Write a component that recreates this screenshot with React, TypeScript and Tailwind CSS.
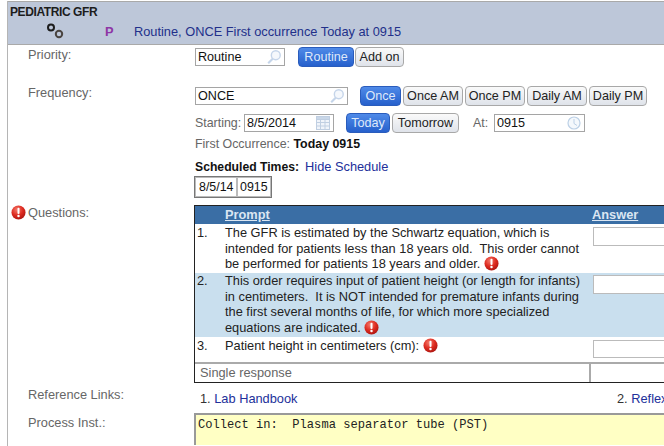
import React from "react";

function Alert({ className = "" }: { className?: string }) {
  return (
    <svg viewBox="0 0 16 16" className={`inline-block w-[15px] h-[15px] ${className}`}>
      <defs>
        <radialGradient id="alertFill" cx="40%" cy="30%" r="75%">
          <stop offset="0%" stopColor="#f47a6c" />
          <stop offset="55%" stopColor="#dd2a1f" />
          <stop offset="100%" stopColor="#a81410" />
        </radialGradient>
      </defs>
      <circle cx="8" cy="8" r="7.5" fill="url(#alertFill)" />
      <rect x="6.9" y="3" width="2.2" height="6.5" rx="1" fill="#fff" />
      <circle cx="8" cy="11.8" r="1.3" fill="#fff" />
    </svg>
  );
}

function SearchIcon() {
  return (
    <svg viewBox="0 0 18 18" className="w-[18px] h-[16px]" fill="none">
      <circle cx="11" cy="7" r="5" stroke="#c5d5ea" strokeWidth="1.6" fill="#f5f8fc" />
      <path d="M7.5 11 L2.5 16" stroke="#c5d5ea" strokeWidth="2.4" />
    </svg>
  );
}

function GearPair() {
  return (
    <svg viewBox="0 0 18 18" className="w-[18px] h-[18px]" fill="none">
      <circle cx="5" cy="4.5" r="3" stroke="#1d1d1d" strokeWidth="2" />
      <circle cx="13" cy="11" r="3.2" stroke="#4a4440" strokeWidth="2" />
    </svg>
  );
}

function CalendarIcon() {
  return (
    <svg viewBox="0 0 14 14" className="w-[14px] h-[14px]" fill="none" stroke="#c0cfe2">
      <rect x="0.5" y="0.5" width="13" height="13" fill="#f0f4fa" />
      <rect x="0.5" y="0.5" width="13" height="3" fill="#c9d7e8" />
      <path d="M0.5 6.5H13.5M0.5 10H13.5M4.5 3.5V13.5M9 3.5V13.5" />
    </svg>
  );
}

function ClockIcon() {
  return (
    <svg viewBox="0 0 14 14" className="w-[14px] h-[14px]" fill="none" stroke="#bcd0e6">
      <circle cx="7" cy="7" r="6" strokeWidth="1.2" fill="#f4f8fc" />
      <path d="M7 3V7.5L10 9.5" />
    </svg>
  );
}

function Pill({ label, active = false, width }: { label: string; active?: boolean; width: string }) {
  if (active) {
    return (
      <span
        className={`${width} h-[20px] flex items-center justify-center rounded-[4px] border border-[#2a5cbc] bg-gradient-to-b from-[#4f8ae8] to-[#2660cc] text-[#dfe9fa] text-[12.6px]`}
      >
        {label}
      </span>
    );
  }
  return (
    <span
      className={`${width} h-[20px] flex items-center justify-center rounded-[4px] border border-[#a8a8a8] bg-gradient-to-b from-[#fafafa] to-[#dfe3ea] text-[#222] text-[12.6px] whitespace-nowrap`}
    >
      {label}
    </span>
  );
}

function Field({ value, width, icon, iconGap = "pr-[1px]" }: { value: string; width: string; icon: React.ReactNode; iconGap?: string }) {
  return (
    <div
      className={`${width} ${iconGap} h-[18px] flex items-center justify-between border border-[#a5a5a5] bg-white pl-[2px] text-[12.6px] text-[#111]`}
    >
      <span>{value}</span>
      {icon}
    </div>
  );
}

const labelClass = "w-[187px] pl-[20px] text-[12.8px] leading-[15px] text-[#666] shrink-0";

function QuestionRow({
  num,
  shaded,
  height,
  textPad,
  boxClass,
  children,
}: {
  num: string;
  shaded?: boolean;
  height: string;
  textPad: string;
  boxClass: string;
  children: React.ReactNode;
}) {
  return (
    <div className={`flex ${height} ${shaded ? "bg-[#c9dfee]" : "bg-white"} text-[12.8px] leading-[15.5px] text-[#222]`}>
      <span className={`w-[30px] pl-[2px] ${textPad} shrink-0`}>{num}</span>
      <div className={`w-[368px] shrink-0 ${textPad} whitespace-nowrap`}>{children}</div>
      <div className="flex-1 overflow-hidden">
        <div className={`w-[90px] ${boxClass} bg-white border border-[#bbb]`} />
      </div>
    </div>
  );
}

export default function App() {
  return (
    <div className="w-[664px] h-[446px] overflow-hidden bg-white font-['Liberation_Sans',Arial,sans-serif] pl-[7px] pt-[1px]">
      <div className="h-[445px] border-l border-[#b5b5b5] overflow-hidden">
        {/* Order header */}
        <div className="h-[44px] bg-[#bdc7d9] border-t border-b border-[#a9a9a9] pl-[2px] pt-[2px]">
          <div className="text-[12px] leading-[16px] font-bold tracking-[-0.4px] text-[#1c1c1c]">PEDIATRIC GFR</div>
          <div className="flex items-center h-[20px] mt-[2px] text-[12.8px] text-[#22308a]">
            <span className="w-[36px]" />
            <GearPair />
            <span className="ml-[41px] w-[29px] font-bold text-[#8e35a5]">P</span>
            <span>Routine, ONCE First occurrence Today at 0915</span>
          </div>
        </div>

        {/* Priority */}
        <div className="flex h-[39px] pt-[3px]">
          <div className={`${labelClass} -mt-[1px]`}>Priority:</div>
          <div className="flex items-start">
            <Field value="Routine" width="w-[90px]" icon={<SearchIcon />} />
            <div className="flex ml-[13px] gap-[1px] -mt-[1px]">
              <Pill label="Routine" active width="w-[56px]" />
              <Pill label="Add on" width="w-[49px]" />
            </div>
          </div>
        </div>

        {/* Frequency */}
        <div className="flex h-[28px] pt-[3px]">
          <div className={`${labelClass} -mt-[2px]`}>Frequency:</div>
          <div className="flex items-start">
            <Field value="ONCE" width="w-[153px]" icon={<SearchIcon />} />
            <div className="flex ml-[12px] gap-[2px] -mt-[1px]">
              <Pill label="Once" active width="w-[41px]" />
              <Pill label="Once AM" width="w-[60px]" />
              <Pill label="Once PM" width="w-[60px]" />
              <Pill label="Daily AM" width="w-[60px]" />
              <Pill label="Daily PM" width="w-[58px]" />
            </div>
          </div>
        </div>

        <div className="ml-[187px]">
          <div className="flex items-center h-[18px] mt-[2px] text-[12.4px] text-[#666]">
            <span className="w-[49px]">Starting:</span>
            <Field value="8/5/2014" width="w-[90px]" icon={<CalendarIcon />} iconGap="pr-[3px]" />
            <div className="flex ml-[12px] gap-[2px]">
              <Pill label="Today" active width="w-[44px]" />
              <Pill label="Tomorrow" width="w-[67px]" />
            </div>
            <span className="ml-[14px] w-[21px]">At:</span>
            <Field value="0915" width="w-[91px]" icon={<ClockIcon />} iconGap="pr-[3px]" />
          </div>
          <div className="mt-[5px] h-[15px] text-[12.4px] leading-[15px] text-[#666]">
            First Occurrence: <b className="text-[#111]">Today 0915</b>
          </div>
          <div className="mt-[7px] h-[15px] text-[12.2px] leading-[15px]">
            <b className="text-[#111]">Scheduled Times:</b>
            <span className="ml-[6px] text-[12.8px] text-[#22309a]">Hide Schedule</span>
          </div>
          <div className="mt-[2px] -ml-[1px] flex w-fit border border-[#777] text-[12.4px] text-[#111] h-[22px]">
            <span className="px-[3px] leading-[19px] border border-[#bbb] w-[42px] whitespace-nowrap">8/5/14</span>
            <span className="px-[2px] leading-[19px] border border-[#bbb]">0915</span>
          </div>
        </div>

        {/* Questions */}
        <div className="flex mt-[7px]">
          <div className="w-[186px] flex items-start pl-[3px] text-[12.8px] leading-[15px] text-[#666] shrink-0">
            <Alert />
            <span className="ml-[2px]">Questions:</span>
          </div>
          <div className="flex-1 border border-[#222] border-r-0 overflow-hidden">
            <div className="flex h-[18px] bg-[#3a6ea5] text-[12.8px] font-bold text-[#dbe6f2] underline leading-[18px]">
              <span className="w-[30px] shrink-0" />
              <span className="w-[367px] shrink-0">Prompt</span>
              <span>Answer</span>
            </div>
            <QuestionRow num="1." height="h-[49px]" textPad="pt-[1px]" boxClass="mt-[3px] h-[19px]">
              The GFR is estimated by the Schwartz equation, which is
              <br />
              intended for patients less than 18 years old.&nbsp; This order cannot
              <br />
              be performed for patients 18 years and older. <Alert className="align-[-3px]" />
            </QuestionRow>
            <QuestionRow num="2." shaded height="h-[64px]" textPad="pt-0" boxClass="mt-[2px] h-[19px]">
              This order requires input of patient height (or length for infants)
              <br />
              in centimeters.&nbsp; It is NOT intended for premature infants during
              <br />
              the first several months of life, for which more specialized
              <br />
              equations are indicated. <Alert className="align-[-3px]" />
            </QuestionRow>
            <QuestionRow num="3." height="h-[25px]" textPad="pt-[1px]" boxClass="mt-[3px] h-[18px]">
              Patient height in centimeters (cm): <Alert className="align-[-3px]" />
            </QuestionRow>
            <div className="flex h-[20px] border-t-2 border-[#aaa] text-[12.8px] text-[#666] leading-[18px]">
              <span className="w-[396px] pl-[5px] border-r-2 border-[#aaa]">Single response</span>
            </div>
          </div>
        </div>

        {/* Reference Links */}
        <div className="flex h-[30px] pt-[1px] text-[12.8px]">
          <div className="w-[186px] pl-[20px] pt-[1px] text-[#666] shrink-0">Reference Links:</div>
          <div className="flex-1 pl-[6px] pt-[5px] flex text-[#333]">
            <span className="w-[417px]">
              1. <span className="text-[#22309a]">Lab Handbook</span>
            </span>
            <span className="whitespace-nowrap">
              2. <span className="text-[#22309a]">Reflex</span>
            </span>
          </div>
        </div>

        {/* Process Inst */}
        <div className="flex text-[12.8px]">
          <div className="w-[186px] pl-[20px] text-[#666] shrink-0">Process Inst.:</div>
          <div className="flex-1 h-[32px] bg-[#ffffc4] border-t-2 border-l-2 border-[#999] font-['Liberation_Mono',monospace] text-[12.1px] text-[#222] whitespace-pre pl-[2px] pt-[1px]">
            Collect in:  Plasma separator tube (PST)
          </div>
        </div>
      </div>
    </div>
  );
}
